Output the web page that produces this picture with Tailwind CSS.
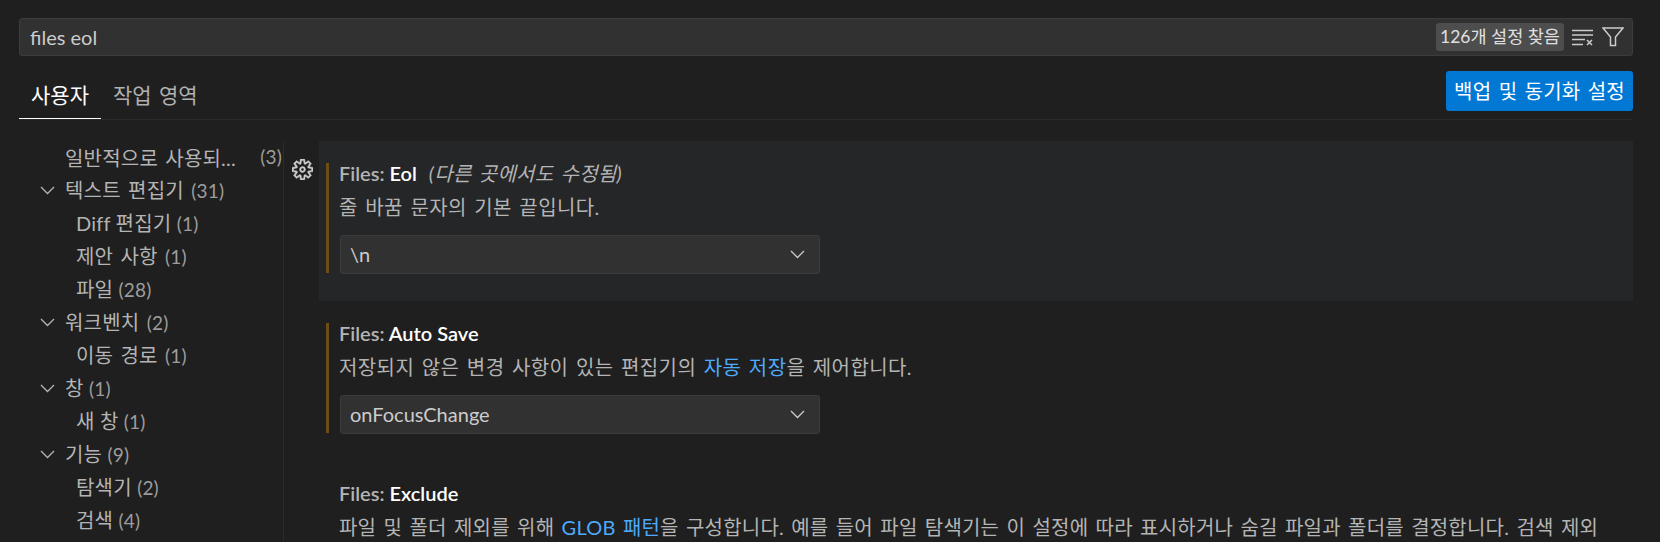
<!DOCTYPE html>
<html lang="ko">
<head>
    <meta charset="UTF-8">
    <title>설정</title>
    <script src="https://cdn.jsdelivr.net/npm/@tailwindcss/browser@4"></script>
</head>
<body class="bg-[#1f1f1f] text-[#cccccc] h-[542px] overflow-hidden font-['Lato','Noto_Sans_CJK_KR',sans-serif] text-[20px] [word-spacing:2px]">
    <div class="pl-[19px] pr-[27px]">
        <!-- search -->
        <div class="pt-[18px]">
            <div class="h-[38px] bg-[#313131] border border-[#3c3c3c] rounded-[3px] flex items-center pl-[10px] pr-[8px]">
                <span class="flex-1 [word-spacing:0px]">files eol</span>
                <span class="h-[28px] w-[128px] bg-[#4d4d4d] rounded-[3px] flex items-center justify-center text-[17.5px] whitespace-nowrap text-[#e0e0e0] [word-spacing:0px]">126개 설정 찾음</span>
                <svg class="ml-[8px] w-[22px] h-[17px]" viewBox="0 0 22 17" fill="none" stroke="#cccccc" stroke-width="1.5">
                    <path d="M0 1.5h21M0 6h21M0 10.5h13M0 15.5h11M15 11l5 5M20 11l-5 5"/>
                </svg>
                <svg class="ml-[8px] w-[22px] h-[20px]" viewBox="0 0 22 20" fill="none" stroke="#cccccc" stroke-width="1.5">
                    <path d="M1 1h20l-7.5 9v8.5h-5V10z"/>
                </svg>
            </div>
        </div>
        <!-- tabs -->
        <div class="h-[64px] border-b border-[#2b2b2b] flex items-end justify-between">
            <div class="flex text-[21px]">
                <div class="h-[48px] px-[12px] flex items-center text-white border-b border-white -mb-px">사용자</div>
                <div class="h-[48px] px-[12px] flex items-center text-[#b0b0b0]">작업 영역</div>
            </div>
            <div class="h-[40px] w-[187px] mb-[8px] bg-[#0078d4] rounded-[3px] text-white flex items-center justify-center tracking-[0.2px] whitespace-nowrap">백업 및 동기화 설정</div>
        </div>
    </div>
    <div class="flex pl-[19px] pr-[27px] pt-[21px]">
        <!-- toc -->
        <div class="w-[265px] h-[401px] border-r border-[#2b2b2b] shrink-0 text-[#b4b4b4] tracking-[0.2px]">
            <div class="h-[33px] flex items-center pl-[46px] pr-[1px] justify-between whitespace-nowrap"><span>일반적으로 사용되...</span><span class="text-[#9d9d9d] text-[19px]">(3)</span></div>
            <div class="h-[33px] flex items-center pl-[21px]"><svg class="w-[15px] h-[9px] mr-[10px]" viewBox="0 0 15 9" fill="none" stroke="#b4b4b4" stroke-width="1.3"><path d="M1 1l6.5 6.5L14 1"/></svg><span>텍스트 편집기 <span class="text-[#9d9d9d] text-[19px]">(31)</span></span></div>
            <div class="h-[33px] flex items-center pl-[57px] [word-spacing:0px]"><span>Diff 편집기 <span class="text-[#9d9d9d] text-[19px]">(1)</span></span></div>
            <div class="h-[33px] flex items-center pl-[57px]"><span>제안 사항 <span class="text-[#9d9d9d] text-[19px]">(1)</span></span></div>
            <div class="h-[33px] flex items-center pl-[57px] [word-spacing:0px]"><span>파일 <span class="text-[#9d9d9d] text-[19px]">(28)</span></span></div>
            <div class="h-[33px] flex items-center pl-[21px]"><svg class="w-[15px] h-[9px] mr-[10px]" viewBox="0 0 15 9" fill="none" stroke="#b4b4b4" stroke-width="1.3"><path d="M1 1l6.5 6.5L14 1"/></svg><span>워크벤치 <span class="text-[#9d9d9d] text-[19px]">(2)</span></span></div>
            <div class="h-[33px] flex items-center pl-[57px]"><span>이동 경로 <span class="text-[#9d9d9d] text-[19px]">(1)</span></span></div>
            <div class="h-[33px] flex items-center pl-[21px] [word-spacing:0px]"><svg class="w-[15px] h-[9px] mr-[10px]" viewBox="0 0 15 9" fill="none" stroke="#b4b4b4" stroke-width="1.3"><path d="M1 1l6.5 6.5L14 1"/></svg><span>창 <span class="text-[#9d9d9d] text-[19px]">(1)</span></span></div>
            <div class="h-[33px] flex items-center pl-[57px] [word-spacing:0px]"><span>새 창 <span class="text-[#9d9d9d] text-[19px]">(1)</span></span></div>
            <div class="h-[33px] flex items-center pl-[21px] [word-spacing:0px]"><svg class="w-[15px] h-[9px] mr-[10px]" viewBox="0 0 15 9" fill="none" stroke="#b4b4b4" stroke-width="1.3"><path d="M1 1l6.5 6.5L14 1"/></svg><span>기능 <span class="text-[#9d9d9d] text-[19px]">(9)</span></span></div>
            <div class="h-[33px] flex items-center pl-[57px] [word-spacing:0px]"><span>탐색기 <span class="text-[#9d9d9d] text-[19px]">(2)</span></span></div>
            <div class="h-[33px] flex items-center pl-[57px] [word-spacing:0px]"><span>검색 <span class="text-[#9d9d9d] text-[19px]">(4)</span></span></div>
        </div>
        <!-- settings -->
        <div class="flex-1 min-w-0">
            <div class="flex">
                <div class="w-[35px] pl-[8px] pt-[18px] shrink-0">
                    <svg class="w-[21px] h-[21px]" viewBox="0 0 24 24" fill="#cccccc" stroke="#cccccc" stroke-width="0.5"><path fill-rule="evenodd" clip-rule="evenodd" d="M19.85 8.75l4.15.83v4.84l-4.15.83 2.35 3.52-3.43 3.43-3.52-2.35-.83 4.15H9.58l-.83-4.15-3.52 2.35-3.43-3.43 2.35-3.52L0 14.42V9.58l4.15-.83L1.8 5.23 5.23 1.8l3.52 2.35L9.58 0h4.84l.83 4.15 3.52-2.35 3.43 3.43-2.35 3.52zm-1.57 5.07l4-.81v-2l-4-.81-.54-1.3 2.29-3.43-1.43-1.43-3.43 2.29-1.3-.54-.81-4h-2l-.81 4-1.3.54-3.43-2.29-1.43 1.43L6.38 8.9l-.54 1.3-4 .81v2l4 .81.54 1.3-2.29 3.43 1.43 1.43 3.43-2.29 1.3.54.81 4h2l.81-4 1.3-.54 3.43 2.29 1.43-1.43-2.29-3.43.54-1.3zm-8.186-4.672A3.43 3.43 0 0 1 12 8.57 3.44 3.44 0 0 1 15.43 12a3.43 3.43 0 1 1-5.336-2.852zm.956 4.274c.281.188.612.288.95.288A1.7 1.7 0 0 0 13.71 12a1.71 1.71 0 1 0-2.66 1.422z"/></svg>
                </div>
                <div class="flex-1 h-[160px] bg-[#252628] pt-[22px] pl-[7px]">
                    <div class="mt-px h-[110px] border-l-[3px] border-[#6b4e16] pl-[10px]">
                        <div class="-mt-px h-[20px] flex items-center"><span class="font-semibold text-[#b4b4b4] [word-spacing:0px]">Files: <span class="text-white">Eol</span></span><span class="ml-[12px] italic tracking-[0.3px] text-[#b4b4b4]">(다른 곳에서도 수정됨)</span></div>
                        <div class="mt-[13px] h-[22px] flex items-center tracking-[0.39px] text-[#b4b4b4]">줄 바꿈 문자의 기본 끝입니다.</div>
                        <div class="ml-px mt-[17px] w-[480px] h-[39px] bg-[#313131] border border-[#3c3c3c] rounded-[3px] flex items-center justify-between pl-[9px] pr-[14px]"><span class="-mt-[2px]">\n</span><svg class="w-[15px] h-[9px]" viewBox="0 0 15 9" fill="none" stroke="#cccccc" stroke-width="1.3"><path d="M1 1l6.5 6.5L14 1"/></svg></div>
                    </div>
                </div>
            </div>
            <div class="ml-[35px] h-[160px] pt-[23px] pl-[7px]">
                <div class="h-[110px] border-l-[3px] border-[#6b4e16] pl-[10px]">
                    <div class="-mt-px h-[20px] flex items-center"><span class="font-semibold text-[#b4b4b4] [word-spacing:0px]">Files: <span class="text-white">Auto Save</span></span></div>
                    <div class="mt-[13px] h-[22px] flex items-center tracking-[0.4px] text-[#b4b4b4]"><span>저장되지 않은 변경 사항이 있는 편집기의 <span class="text-[#4daafc]">자동 저장</span>을 제어합니다.</span></div>
                    <div class="ml-px mt-[17px] w-[480px] h-[39px] bg-[#313131] border border-[#3c3c3c] rounded-[3px] flex items-center justify-between pl-[9px] pr-[14px]"><span class="-mt-[2px]">onFocusChange</span><svg class="w-[15px] h-[9px]" viewBox="0 0 15 9" fill="none" stroke="#cccccc" stroke-width="1.3"><path d="M1 1l6.5 6.5L14 1"/></svg></div>
                </div>
            </div>
            <div class="ml-[35px] pt-[22px] pl-[20px] whitespace-nowrap">
                <div class="h-[20px] flex items-center"><span class="font-semibold text-[#b4b4b4] [word-spacing:0px]">Files: <span class="text-white">Exclude</span></span></div>
                <div class="mt-[13px] h-[22px] flex items-center tracking-[0.2px] text-[#b4b4b4]"><span>파일 및 폴더 제외를 위해 <span class="text-[#4daafc]">GLOB 패턴</span>을 구성합니다. 예를 들어 파일 탐색기는 이 설정에 따라 표시하거나 숨길 파일과 폴더를 결정합니다. 검색 제외</span></div>
            </div>
        </div>
    </div>
</body>
</html>
